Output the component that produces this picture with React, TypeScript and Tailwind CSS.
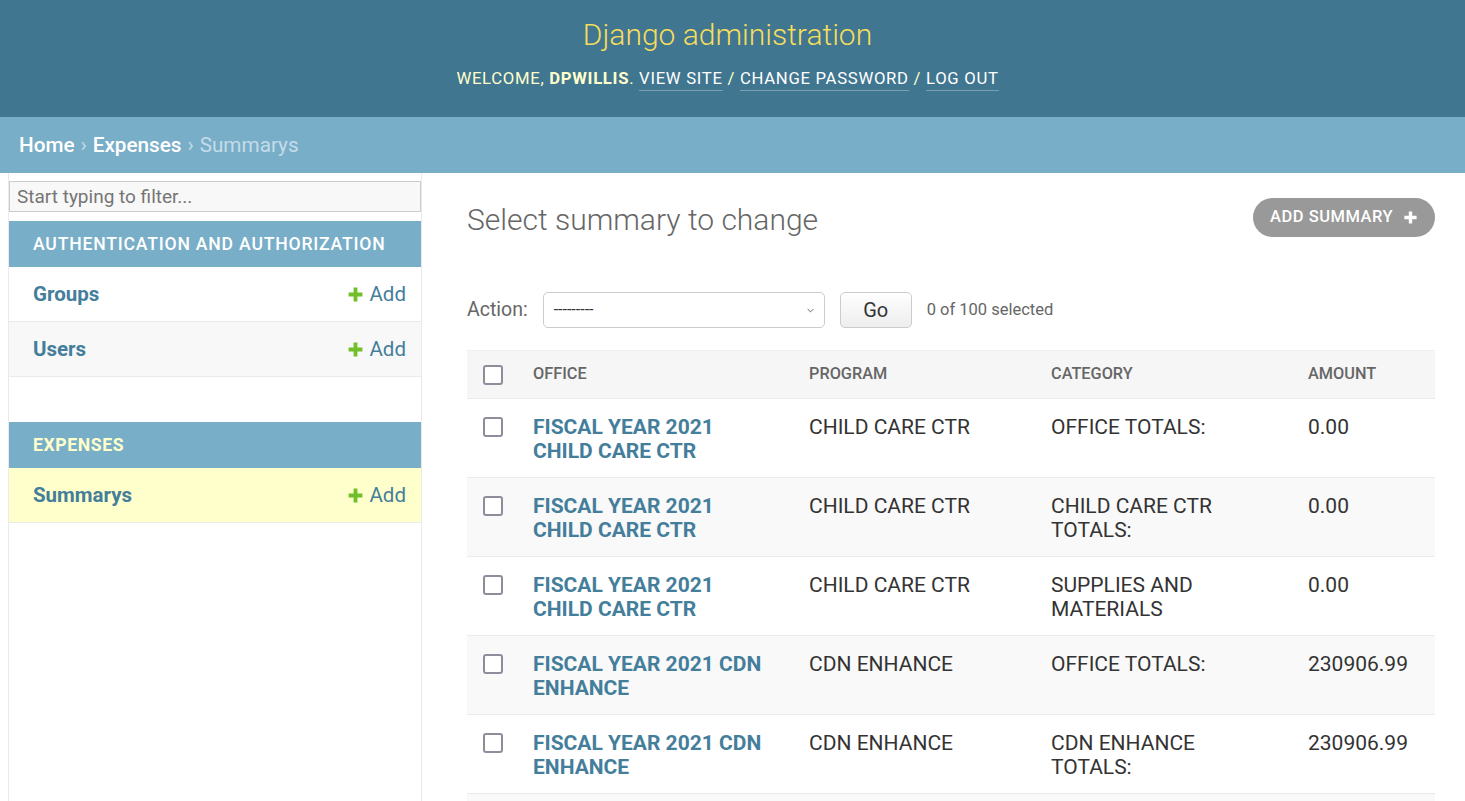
import React from "react";

const rows = [
  { office: ["FISCAL YEAR 2021", "CHILD CARE CTR"], program: "CHILD CARE CTR", category: ["OFFICE TOTALS:"], amount: "0.00" },
  { office: ["FISCAL YEAR 2021", "CHILD CARE CTR"], program: "CHILD CARE CTR", category: ["CHILD CARE CTR", "TOTALS:"], amount: "0.00" },
  { office: ["FISCAL YEAR 2021", "CHILD CARE CTR"], program: "CHILD CARE CTR", category: ["SUPPLIES AND", "MATERIALS"], amount: "0.00" },
  { office: ["FISCAL YEAR 2021 CDN", "ENHANCE"], program: "CDN ENHANCE", category: ["OFFICE TOTALS:"], amount: "230906.99" },
  { office: ["FISCAL YEAR 2021 CDN", "ENHANCE"], program: "CDN ENHANCE", category: ["CDN ENHANCE", "TOTALS:"], amount: "230906.99" },
  { office: ["FISCAL YEAR 2021 CDN", "ENHANCE"], program: "CDN ENHANCE", category: ["OTHER", "TOTALS:"], amount: "230906.99" },
];

function Plus({ className }: { className?: string }) {
  return (
    <svg viewBox="0 0 16 16" className={className} fill="currentColor">
      <path d="M6.2 1.5h3.6v4.7h4.7v3.6H9.8v4.7H6.2V9.8H1.5V6.2h4.7z" />
    </svg>
  );
}

function Checkbox() {
  return <div className="w-[20px] h-[20px] border-2 border-[#8f8d9c] rounded-[3px] bg-white" />;
}

function ModuleRow({ name, bg }: { name: string; bg: string }) {
  return (
    <div className={`flex items-center justify-between h-[55px] border-b border-[#eaeaea] pl-[24px] pr-[15px] ${bg}`}>
      <span className="text-[20.5px] font-bold text-[#447e9b]">{name}</span>
      <span className="flex items-center gap-[6px] text-[20.5px] text-[#447e9b]">
        <Plus className="w-[17px] h-[17px] text-[#70bf2b]" />
        Add
      </span>
    </div>
  );
}

export default function App() {
  return (
    <div className="min-h-screen bg-white text-[#333]" style={{ fontFamily: "Roboto, 'Liberation Sans', sans-serif" }}>
      <header className="h-[117px] bg-[#417690] flex flex-col items-center pr-[10px]">
        <div className="mt-[15px] text-[30px] font-light leading-[40px] text-[#f5dd5d]">Django administration</div>
        <div className="mt-[12px] text-[16.7px] leading-[24px] tracking-[0.7px] uppercase text-[#ffc]">
          WELCOME, <strong className="font-bold">DPWILLIS</strong>.{" "}
          <span className="text-white border-b border-[rgba(255,255,255,0.3)] pb-[2px]">View site</span>
          {" / "}
          <span className="text-white border-b border-[rgba(255,255,255,0.3)] pb-[2px]">Change password</span>
          {" / "}
          <span className="text-white border-b border-[rgba(255,255,255,0.3)] pb-[2px]">Log out</span>
        </div>
      </header>
      <div className="h-[56px] bg-[#79aec8] flex items-center pl-[19px] pt-[1px] text-[20.7px] text-white">
        <span className="font-medium">Home</span>
        <span className="mx-[6px] text-[#c4dce8]">›</span>
        <span className="font-medium">Expenses</span>
        <span className="mx-[6px] text-[#c4dce8]">›</span>
        <span className="text-[#c4dce8]">Summarys</span>
      </div>
      <div className="flex">
        <nav className="ml-[8px] w-[414px] border-x border-[#eaeaea] min-h-[628px] shrink-0">
          <div className="pt-[8px]">
            <div className="h-[31px] bg-[#f8f8f8] border border-[#ccc] flex items-center pl-[7px] pt-[1px] text-[19px] text-[#757575]">
              Start typing to filter...
            </div>
          </div>
          <div className="mt-[9px]">
            <div className="h-[46px] bg-[#79aec8] flex items-center pl-[24px] text-[17.6px] font-medium tracking-[0.8px] text-white">
              AUTHENTICATION AND AUTHORIZATION
            </div>
            <ModuleRow name="Groups" bg="bg-white" />
            <ModuleRow name="Users" bg="bg-[#f8f8f8]" />
          </div>
          <div className="mt-[45px]">
            <div className="h-[46px] bg-[#79aec8] flex items-center pl-[24px] text-[17.6px] font-bold tracking-[0.6px] text-[#ffc]">
              EXPENSES
            </div>
            <ModuleRow name="Summarys" bg="bg-[#ffc]" />
          </div>
        </nav>
        <main className="flex-1 pl-[45px] pr-[30px]">
          <div className="flex items-center justify-between mt-[25px]">
            <h1 className="text-[30px] font-light text-[#666] leading-[40px] mt-[2px]">Select summary to change</h1>
            <div className="h-[39px] px-[17px] rounded-full bg-[#999] flex items-center gap-[10px] text-white text-[16.5px] font-medium tracking-[0.5px] -mt-[3px]">
              ADD SUMMARY
              <Plus className="w-[15px] h-[15px]" />
            </div>
          </div>
          <div className="flex items-center mt-[52px] h-[36px]">
            <span className="text-[19.5px] text-[#666]">Action:</span>
            <div className="ml-[15px] w-[282px] h-[36px] border border-[#ccc] rounded-[5px] flex items-center justify-between px-[10px]">
              <span className="text-[16px] text-[#333]">---------</span>
              <svg viewBox="0 0 10 6" className="w-[7px] h-[5px] text-[#555]" fill="none" stroke="currentColor" strokeWidth="1.3">
                <path d="M1 1l4 4 4-4" />
              </svg>
            </div>
            <div className="ml-[15px] w-[72px] h-[36px] border border-[#ccc] rounded-[5px] bg-gradient-to-b from-white to-[#ededed] flex items-center justify-center text-[20px] text-[#333]">
              Go
            </div>
            <span className="ml-[15px] text-[16.5px] text-[#666]">0 of 100 selected</span>
          </div>
          <div className="mt-[22px] border-t border-[#eee]">
            <div className="grid grid-cols-[66px_276px_242px_257px_1fr] h-[48px] items-center bg-[#f6f6f6] border-b border-[#eaeaea] text-[16.3px] font-medium text-[#666]">
              <div className="pl-[16px]"><Checkbox /></div>
              <div>OFFICE</div>
              <div>PROGRAM</div>
              <div>CATEGORY</div>
              <div>AMOUNT</div>
            </div>
            {rows.map((r, i) => (
              <div
                key={i}
                className={`grid grid-cols-[66px_276px_242px_257px_1fr] border-b border-[#eaeaea] pt-[16px] pb-[14px] text-[21px] leading-[24px] ${i % 2 === 1 ? "bg-[#f9f9f9]" : "bg-white"}`}
              >
                <div className="pl-[16px] pt-[2px]"><Checkbox /></div>
                <div className="font-bold text-[#447e9b]">
                  {r.office.map((l, j) => <div key={j}>{l}</div>)}
                </div>
                <div>{r.program}</div>
                <div>{r.category.map((l, j) => <div key={j}>{l}</div>)}</div>
                <div>{r.amount}</div>
              </div>
            ))}
          </div>
        </main>
      </div>
    </div>
  );
}
